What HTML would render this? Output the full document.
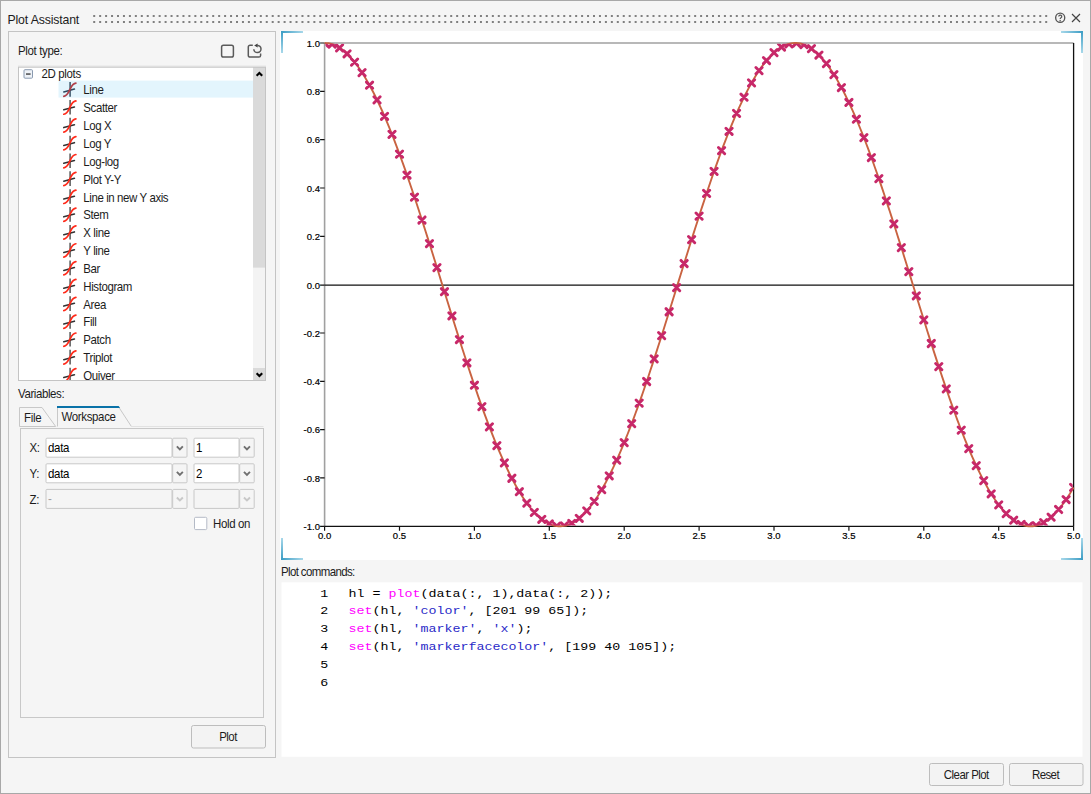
<!DOCTYPE html>
<html><head><meta charset="utf-8"><title>Plot Assistant</title>
<style>
html,body{margin:0;padding:0;width:1091px;height:794px;overflow:hidden;background:#f5f5f5}
svg.main{display:block}
svg.main text{font-family:"Liberation Sans",sans-serif}
</style></head><body>
<svg class="main" width="1091" height="794" viewBox="0 0 1091 794">
<rect x="0" y="0" width="1091" height="794" fill="#f5f5f5"/>
<rect x="0.5" y="0.5" width="1090" height="793" fill="none" stroke="#a8a8a8" stroke-width="1"/>
<text transform="translate(7.5,24) scale(0.9803921568627451,1)" x="0" y="0" style="font-size:12.546000000000001px;letter-spacing:-0.153px" fill="#1c1c1c" text-anchor="start" >Plot Assistant</text>
<path d="M93.20,15h2v2h-2zM99.15,15h2v2h-2zM105.10,15h2v2h-2zM111.05,15h2v2h-2zM117.00,15h2v2h-2zM122.95,15h2v2h-2zM128.90,15h2v2h-2zM134.85,15h2v2h-2zM140.80,15h2v2h-2zM146.75,15h2v2h-2zM152.70,15h2v2h-2zM158.65,15h2v2h-2zM164.60,15h2v2h-2zM170.55,15h2v2h-2zM176.50,15h2v2h-2zM182.45,15h2v2h-2zM188.40,15h2v2h-2zM194.35,15h2v2h-2zM200.30,15h2v2h-2zM206.25,15h2v2h-2zM212.20,15h2v2h-2zM218.15,15h2v2h-2zM224.10,15h2v2h-2zM230.05,15h2v2h-2zM236.00,15h2v2h-2zM241.95,15h2v2h-2zM247.90,15h2v2h-2zM253.85,15h2v2h-2zM259.80,15h2v2h-2zM265.75,15h2v2h-2zM271.70,15h2v2h-2zM277.65,15h2v2h-2zM283.60,15h2v2h-2zM289.55,15h2v2h-2zM295.50,15h2v2h-2zM301.45,15h2v2h-2zM307.40,15h2v2h-2zM313.35,15h2v2h-2zM319.30,15h2v2h-2zM325.25,15h2v2h-2zM331.20,15h2v2h-2zM337.15,15h2v2h-2zM343.10,15h2v2h-2zM349.05,15h2v2h-2zM355.00,15h2v2h-2zM360.95,15h2v2h-2zM366.90,15h2v2h-2zM372.85,15h2v2h-2zM378.80,15h2v2h-2zM384.75,15h2v2h-2zM390.70,15h2v2h-2zM396.65,15h2v2h-2zM402.60,15h2v2h-2zM408.55,15h2v2h-2zM414.50,15h2v2h-2zM420.45,15h2v2h-2zM426.40,15h2v2h-2zM432.35,15h2v2h-2zM438.30,15h2v2h-2zM444.25,15h2v2h-2zM450.20,15h2v2h-2zM456.15,15h2v2h-2zM462.10,15h2v2h-2zM468.05,15h2v2h-2zM474.00,15h2v2h-2zM479.95,15h2v2h-2zM485.90,15h2v2h-2zM491.85,15h2v2h-2zM497.80,15h2v2h-2zM503.75,15h2v2h-2zM509.70,15h2v2h-2zM515.65,15h2v2h-2zM521.60,15h2v2h-2zM527.55,15h2v2h-2zM533.50,15h2v2h-2zM539.45,15h2v2h-2zM545.40,15h2v2h-2zM551.35,15h2v2h-2zM557.30,15h2v2h-2zM563.25,15h2v2h-2zM569.20,15h2v2h-2zM575.15,15h2v2h-2zM581.10,15h2v2h-2zM587.05,15h2v2h-2zM593.00,15h2v2h-2zM598.95,15h2v2h-2zM604.90,15h2v2h-2zM610.85,15h2v2h-2zM616.80,15h2v2h-2zM622.75,15h2v2h-2zM628.70,15h2v2h-2zM634.65,15h2v2h-2zM640.60,15h2v2h-2zM646.55,15h2v2h-2zM652.50,15h2v2h-2zM658.45,15h2v2h-2zM664.40,15h2v2h-2zM670.35,15h2v2h-2zM676.30,15h2v2h-2zM682.25,15h2v2h-2zM688.20,15h2v2h-2zM694.15,15h2v2h-2zM700.10,15h2v2h-2zM706.05,15h2v2h-2zM712.00,15h2v2h-2zM717.95,15h2v2h-2zM723.90,15h2v2h-2zM729.85,15h2v2h-2zM735.80,15h2v2h-2zM741.75,15h2v2h-2zM747.70,15h2v2h-2zM753.65,15h2v2h-2zM759.60,15h2v2h-2zM765.55,15h2v2h-2zM771.50,15h2v2h-2zM777.45,15h2v2h-2zM783.40,15h2v2h-2zM789.35,15h2v2h-2zM795.30,15h2v2h-2zM801.25,15h2v2h-2zM807.20,15h2v2h-2zM813.15,15h2v2h-2zM819.10,15h2v2h-2zM825.05,15h2v2h-2zM831.00,15h2v2h-2zM836.95,15h2v2h-2zM842.90,15h2v2h-2zM848.85,15h2v2h-2zM854.80,15h2v2h-2zM860.75,15h2v2h-2zM866.70,15h2v2h-2zM872.65,15h2v2h-2zM878.60,15h2v2h-2zM884.55,15h2v2h-2zM890.50,15h2v2h-2zM896.45,15h2v2h-2zM902.40,15h2v2h-2zM908.35,15h2v2h-2zM914.30,15h2v2h-2zM920.25,15h2v2h-2zM926.20,15h2v2h-2zM932.15,15h2v2h-2zM938.10,15h2v2h-2zM944.05,15h2v2h-2zM950.00,15h2v2h-2zM955.95,15h2v2h-2zM961.90,15h2v2h-2zM967.85,15h2v2h-2zM973.80,15h2v2h-2zM979.75,15h2v2h-2zM985.70,15h2v2h-2zM991.65,15h2v2h-2zM997.60,15h2v2h-2zM1003.55,15h2v2h-2zM1009.50,15h2v2h-2zM1015.45,15h2v2h-2zM1021.40,15h2v2h-2zM1027.35,15h2v2h-2zM1033.30,15h2v2h-2zM1039.25,15h2v2h-2zM1045.20,15h2v2h-2zM93.20,21h2v2h-2zM99.15,21h2v2h-2zM105.10,21h2v2h-2zM111.05,21h2v2h-2zM117.00,21h2v2h-2zM122.95,21h2v2h-2zM128.90,21h2v2h-2zM134.85,21h2v2h-2zM140.80,21h2v2h-2zM146.75,21h2v2h-2zM152.70,21h2v2h-2zM158.65,21h2v2h-2zM164.60,21h2v2h-2zM170.55,21h2v2h-2zM176.50,21h2v2h-2zM182.45,21h2v2h-2zM188.40,21h2v2h-2zM194.35,21h2v2h-2zM200.30,21h2v2h-2zM206.25,21h2v2h-2zM212.20,21h2v2h-2zM218.15,21h2v2h-2zM224.10,21h2v2h-2zM230.05,21h2v2h-2zM236.00,21h2v2h-2zM241.95,21h2v2h-2zM247.90,21h2v2h-2zM253.85,21h2v2h-2zM259.80,21h2v2h-2zM265.75,21h2v2h-2zM271.70,21h2v2h-2zM277.65,21h2v2h-2zM283.60,21h2v2h-2zM289.55,21h2v2h-2zM295.50,21h2v2h-2zM301.45,21h2v2h-2zM307.40,21h2v2h-2zM313.35,21h2v2h-2zM319.30,21h2v2h-2zM325.25,21h2v2h-2zM331.20,21h2v2h-2zM337.15,21h2v2h-2zM343.10,21h2v2h-2zM349.05,21h2v2h-2zM355.00,21h2v2h-2zM360.95,21h2v2h-2zM366.90,21h2v2h-2zM372.85,21h2v2h-2zM378.80,21h2v2h-2zM384.75,21h2v2h-2zM390.70,21h2v2h-2zM396.65,21h2v2h-2zM402.60,21h2v2h-2zM408.55,21h2v2h-2zM414.50,21h2v2h-2zM420.45,21h2v2h-2zM426.40,21h2v2h-2zM432.35,21h2v2h-2zM438.30,21h2v2h-2zM444.25,21h2v2h-2zM450.20,21h2v2h-2zM456.15,21h2v2h-2zM462.10,21h2v2h-2zM468.05,21h2v2h-2zM474.00,21h2v2h-2zM479.95,21h2v2h-2zM485.90,21h2v2h-2zM491.85,21h2v2h-2zM497.80,21h2v2h-2zM503.75,21h2v2h-2zM509.70,21h2v2h-2zM515.65,21h2v2h-2zM521.60,21h2v2h-2zM527.55,21h2v2h-2zM533.50,21h2v2h-2zM539.45,21h2v2h-2zM545.40,21h2v2h-2zM551.35,21h2v2h-2zM557.30,21h2v2h-2zM563.25,21h2v2h-2zM569.20,21h2v2h-2zM575.15,21h2v2h-2zM581.10,21h2v2h-2zM587.05,21h2v2h-2zM593.00,21h2v2h-2zM598.95,21h2v2h-2zM604.90,21h2v2h-2zM610.85,21h2v2h-2zM616.80,21h2v2h-2zM622.75,21h2v2h-2zM628.70,21h2v2h-2zM634.65,21h2v2h-2zM640.60,21h2v2h-2zM646.55,21h2v2h-2zM652.50,21h2v2h-2zM658.45,21h2v2h-2zM664.40,21h2v2h-2zM670.35,21h2v2h-2zM676.30,21h2v2h-2zM682.25,21h2v2h-2zM688.20,21h2v2h-2zM694.15,21h2v2h-2zM700.10,21h2v2h-2zM706.05,21h2v2h-2zM712.00,21h2v2h-2zM717.95,21h2v2h-2zM723.90,21h2v2h-2zM729.85,21h2v2h-2zM735.80,21h2v2h-2zM741.75,21h2v2h-2zM747.70,21h2v2h-2zM753.65,21h2v2h-2zM759.60,21h2v2h-2zM765.55,21h2v2h-2zM771.50,21h2v2h-2zM777.45,21h2v2h-2zM783.40,21h2v2h-2zM789.35,21h2v2h-2zM795.30,21h2v2h-2zM801.25,21h2v2h-2zM807.20,21h2v2h-2zM813.15,21h2v2h-2zM819.10,21h2v2h-2zM825.05,21h2v2h-2zM831.00,21h2v2h-2zM836.95,21h2v2h-2zM842.90,21h2v2h-2zM848.85,21h2v2h-2zM854.80,21h2v2h-2zM860.75,21h2v2h-2zM866.70,21h2v2h-2zM872.65,21h2v2h-2zM878.60,21h2v2h-2zM884.55,21h2v2h-2zM890.50,21h2v2h-2zM896.45,21h2v2h-2zM902.40,21h2v2h-2zM908.35,21h2v2h-2zM914.30,21h2v2h-2zM920.25,21h2v2h-2zM926.20,21h2v2h-2zM932.15,21h2v2h-2zM938.10,21h2v2h-2zM944.05,21h2v2h-2zM950.00,21h2v2h-2zM955.95,21h2v2h-2zM961.90,21h2v2h-2zM967.85,21h2v2h-2zM973.80,21h2v2h-2zM979.75,21h2v2h-2zM985.70,21h2v2h-2zM991.65,21h2v2h-2zM997.60,21h2v2h-2zM1003.55,21h2v2h-2zM1009.50,21h2v2h-2zM1015.45,21h2v2h-2zM1021.40,21h2v2h-2zM1027.35,21h2v2h-2zM1033.30,21h2v2h-2zM1039.25,21h2v2h-2zM1045.20,21h2v2h-2z" fill="#808080"/>
<circle cx="1060.2" cy="17.7" r="4.55" fill="none" stroke="#555" stroke-width="1.35"/>
<path d="M1058.75,16.5 a1.5,1.45 0 1 1 2.25,1.25 q-0.8,0.45 -0.8,1.25" fill="none" stroke="#555" stroke-width="1.25"/>
<rect x="1059.5" y="19.9" width="1.3" height="1.2" fill="#555"/>
<path d="M1072,14 L1080,22 M1080,14 L1072,22" stroke="#444" stroke-width="1.15"/>
<rect x="8.5" y="31.5" width="267" height="726" fill="none" stroke="#c4c4c4"/>
<text transform="translate(18,54.5) scale(0.8928571428571428,1)" x="0" y="0" style="font-size:12.88px;letter-spacing:-0.392px" fill="#1c1c1c" text-anchor="start" >Plot type:</text>
<rect x="221.6" y="45.3" width="11.8" height="11.8" rx="1.8" fill="none" stroke="#5a5a5a" stroke-width="1.5"/>
<path d="M252.8,45.3 H250 a1.7,1.7 0 0 0 -1.7,1.7 V55.4 a1.7,1.7 0 0 0 1.7,1.7 H258.9 a1.7,1.7 0 0 0 1.7,-1.7 V53.6" fill="none" stroke="#5a5a5a" stroke-width="1.5"/>
<path d="M257.3,45.4 A3.6,3.6 0 1 1 253.8,49.2" fill="none" stroke="#5a5a5a" stroke-width="1.5"/>
<path d="M254.2,45.6 L257.6,43.4 L257.6,47.6 z" fill="#404040"/>
<rect x="18" y="67" width="248" height="314" fill="#fff"/>
<rect x="58.5" y="80.6" width="194.5" height="17" fill="#e3f5fd"/>
<rect x="253" y="67" width="12.5" height="313.5" fill="#f3f3f3"/>
<rect x="253" y="67" width="12.5" height="200.6" fill="#dadada"/>
<rect x="253" y="368" width="12.5" height="12.5" fill="#dadada"/>
<path d="M256.6,75.8 L259.4,73 L262.2,75.8" fill="none" stroke="#000" stroke-width="2.1"/>
<path d="M256.6,373.2 L259.4,376 L262.2,373.2" fill="none" stroke="#000" stroke-width="2.1"/>
<rect x="18.5" y="67.2" width="247" height="313.3" fill="none" stroke="#c4c4c4"/>
<path d="M18,66.2 H266" stroke="#dcdcdc"/>
<rect x="24" y="69.7" width="8.5" height="8.5" rx="1" fill="#eef2f7" stroke="#8a9ab0" stroke-width="1"/>
<rect x="26" y="73.4" width="4.6" height="1.3" fill="#333"/>
<text transform="translate(41.5,78) scale(0.8928571428571428,1)" x="0" y="0" style="font-size:12.88px;letter-spacing:-0.392px" fill="#1c1c1c" text-anchor="start" >2D plots</text>
<svg x="18" y="67" width="235" height="313" overflow="hidden"><g transform="translate(-18,-67)">
<path d="M70.1,82.10 V96.70" stroke="#3a5468" stroke-width="1.5" fill="none"/>
<path d="M63.8,91.90 L74.4,89.10" stroke="#2f4a60" stroke-width="1.6" stroke-linecap="round" fill="none"/>
<path d="M63.8,96.40 C67.5,95.70 68.5,92.40 70,89.40 S72.5,83.40 75.9,83.10" stroke="#b0404a" stroke-width="1.7" stroke-linecap="round" fill="none"/>
<text transform="translate(83.3,94.4) scale(0.8928571428571428,1)" x="0" y="0" style="font-size:12.88px;letter-spacing:-0.448px" fill="#1c1c1c" text-anchor="start" >Line</text>
<path d="M70.1,99.95 V114.55" stroke="#555" stroke-width="1.5" fill="none"/>
<path d="M63.8,109.75 L74.4,106.95" stroke="#333" stroke-width="1.6" stroke-linecap="round" fill="none"/>
<path d="M63.8,114.25 C67.5,113.55 68.5,110.25 70,107.25 S72.5,101.25 75.9,100.95" stroke="#ff2a1a" stroke-width="1.7" stroke-linecap="round" fill="none"/>
<text transform="translate(83.3,112.25) scale(0.8928571428571428,1)" x="0" y="0" style="font-size:12.88px;letter-spacing:-0.448px" fill="#1c1c1c" text-anchor="start" >Scatter</text>
<path d="M70.1,117.80 V132.40" stroke="#555" stroke-width="1.5" fill="none"/>
<path d="M63.8,127.60 L74.4,124.80" stroke="#333" stroke-width="1.6" stroke-linecap="round" fill="none"/>
<path d="M63.8,132.10 C67.5,131.40 68.5,128.10 70,125.10 S72.5,119.10 75.9,118.80" stroke="#ff2a1a" stroke-width="1.7" stroke-linecap="round" fill="none"/>
<text transform="translate(83.3,130.1) scale(0.8928571428571428,1)" x="0" y="0" style="font-size:12.88px;letter-spacing:-0.448px" fill="#1c1c1c" text-anchor="start" >Log X</text>
<path d="M70.1,135.65 V150.25" stroke="#555" stroke-width="1.5" fill="none"/>
<path d="M63.8,145.45 L74.4,142.65" stroke="#333" stroke-width="1.6" stroke-linecap="round" fill="none"/>
<path d="M63.8,149.95 C67.5,149.25 68.5,145.95 70,142.95 S72.5,136.95 75.9,136.65" stroke="#ff2a1a" stroke-width="1.7" stroke-linecap="round" fill="none"/>
<text transform="translate(83.3,147.95) scale(0.8928571428571428,1)" x="0" y="0" style="font-size:12.88px;letter-spacing:-0.448px" fill="#1c1c1c" text-anchor="start" >Log Y</text>
<path d="M70.1,153.50 V168.10" stroke="#555" stroke-width="1.5" fill="none"/>
<path d="M63.8,163.30 L74.4,160.50" stroke="#333" stroke-width="1.6" stroke-linecap="round" fill="none"/>
<path d="M63.8,167.80 C67.5,167.10 68.5,163.80 70,160.80 S72.5,154.80 75.9,154.50" stroke="#ff2a1a" stroke-width="1.7" stroke-linecap="round" fill="none"/>
<text transform="translate(83.3,165.8) scale(0.8928571428571428,1)" x="0" y="0" style="font-size:12.88px;letter-spacing:-0.448px" fill="#1c1c1c" text-anchor="start" >Log-log</text>
<path d="M70.1,171.35 V185.95" stroke="#555" stroke-width="1.5" fill="none"/>
<path d="M63.8,181.15 L74.4,178.35" stroke="#333" stroke-width="1.6" stroke-linecap="round" fill="none"/>
<path d="M63.8,185.65 C67.5,184.95 68.5,181.65 70,178.65 S72.5,172.65 75.9,172.35" stroke="#ff2a1a" stroke-width="1.7" stroke-linecap="round" fill="none"/>
<text transform="translate(83.3,183.65) scale(0.8928571428571428,1)" x="0" y="0" style="font-size:12.88px;letter-spacing:-0.448px" fill="#1c1c1c" text-anchor="start" >Plot Y-Y</text>
<path d="M70.1,189.20 V203.80" stroke="#555" stroke-width="1.5" fill="none"/>
<path d="M63.8,199.00 L74.4,196.20" stroke="#333" stroke-width="1.6" stroke-linecap="round" fill="none"/>
<path d="M63.8,203.50 C67.5,202.80 68.5,199.50 70,196.50 S72.5,190.50 75.9,190.20" stroke="#ff2a1a" stroke-width="1.7" stroke-linecap="round" fill="none"/>
<text transform="translate(83.3,201.5) scale(0.8928571428571428,1)" x="0" y="0" style="font-size:12.88px;letter-spacing:-0.448px" fill="#1c1c1c" text-anchor="start" >Line in new Y axis</text>
<path d="M70.1,207.05 V221.65" stroke="#555" stroke-width="1.5" fill="none"/>
<path d="M63.8,216.85 L74.4,214.05" stroke="#333" stroke-width="1.6" stroke-linecap="round" fill="none"/>
<path d="M63.8,221.35 C67.5,220.65 68.5,217.35 70,214.35 S72.5,208.35 75.9,208.05" stroke="#ff2a1a" stroke-width="1.7" stroke-linecap="round" fill="none"/>
<text transform="translate(83.3,219.35) scale(0.8928571428571428,1)" x="0" y="0" style="font-size:12.88px;letter-spacing:-0.448px" fill="#1c1c1c" text-anchor="start" >Stem</text>
<path d="M70.1,224.90 V239.50" stroke="#555" stroke-width="1.5" fill="none"/>
<path d="M63.8,234.70 L74.4,231.90" stroke="#333" stroke-width="1.6" stroke-linecap="round" fill="none"/>
<path d="M63.8,239.20 C67.5,238.50 68.5,235.20 70,232.20 S72.5,226.20 75.9,225.90" stroke="#ff2a1a" stroke-width="1.7" stroke-linecap="round" fill="none"/>
<text transform="translate(83.3,237.2) scale(0.8928571428571428,1)" x="0" y="0" style="font-size:12.88px;letter-spacing:-0.448px" fill="#1c1c1c" text-anchor="start" >X line</text>
<path d="M70.1,242.75 V257.35" stroke="#555" stroke-width="1.5" fill="none"/>
<path d="M63.8,252.55 L74.4,249.75" stroke="#333" stroke-width="1.6" stroke-linecap="round" fill="none"/>
<path d="M63.8,257.05 C67.5,256.35 68.5,253.05 70,250.05 S72.5,244.05 75.9,243.75" stroke="#ff2a1a" stroke-width="1.7" stroke-linecap="round" fill="none"/>
<text transform="translate(83.3,255.05) scale(0.8928571428571428,1)" x="0" y="0" style="font-size:12.88px;letter-spacing:-0.448px" fill="#1c1c1c" text-anchor="start" >Y line</text>
<path d="M70.1,260.60 V275.20" stroke="#555" stroke-width="1.5" fill="none"/>
<path d="M63.8,270.40 L74.4,267.60" stroke="#333" stroke-width="1.6" stroke-linecap="round" fill="none"/>
<path d="M63.8,274.90 C67.5,274.20 68.5,270.90 70,267.90 S72.5,261.90 75.9,261.60" stroke="#ff2a1a" stroke-width="1.7" stroke-linecap="round" fill="none"/>
<text transform="translate(83.3,272.9) scale(0.8928571428571428,1)" x="0" y="0" style="font-size:12.88px;letter-spacing:-0.448px" fill="#1c1c1c" text-anchor="start" >Bar</text>
<path d="M70.1,278.45 V293.05" stroke="#555" stroke-width="1.5" fill="none"/>
<path d="M63.8,288.25 L74.4,285.45" stroke="#333" stroke-width="1.6" stroke-linecap="round" fill="none"/>
<path d="M63.8,292.75 C67.5,292.05 68.5,288.75 70,285.75 S72.5,279.75 75.9,279.45" stroke="#ff2a1a" stroke-width="1.7" stroke-linecap="round" fill="none"/>
<text transform="translate(83.3,290.75) scale(0.8928571428571428,1)" x="0" y="0" style="font-size:12.88px;letter-spacing:-0.448px" fill="#1c1c1c" text-anchor="start" >Histogram</text>
<path d="M70.1,296.30 V310.90" stroke="#555" stroke-width="1.5" fill="none"/>
<path d="M63.8,306.10 L74.4,303.30" stroke="#333" stroke-width="1.6" stroke-linecap="round" fill="none"/>
<path d="M63.8,310.60 C67.5,309.90 68.5,306.60 70,303.60 S72.5,297.60 75.9,297.30" stroke="#ff2a1a" stroke-width="1.7" stroke-linecap="round" fill="none"/>
<text transform="translate(83.3,308.6) scale(0.8928571428571428,1)" x="0" y="0" style="font-size:12.88px;letter-spacing:-0.448px" fill="#1c1c1c" text-anchor="start" >Area</text>
<path d="M70.1,314.15 V328.75" stroke="#555" stroke-width="1.5" fill="none"/>
<path d="M63.8,323.95 L74.4,321.15" stroke="#333" stroke-width="1.6" stroke-linecap="round" fill="none"/>
<path d="M63.8,328.45 C67.5,327.75 68.5,324.45 70,321.45 S72.5,315.45 75.9,315.15" stroke="#ff2a1a" stroke-width="1.7" stroke-linecap="round" fill="none"/>
<text transform="translate(83.3,326.45) scale(0.8928571428571428,1)" x="0" y="0" style="font-size:12.88px;letter-spacing:-0.448px" fill="#1c1c1c" text-anchor="start" >Fill</text>
<path d="M70.1,332.00 V346.60" stroke="#555" stroke-width="1.5" fill="none"/>
<path d="M63.8,341.80 L74.4,339.00" stroke="#333" stroke-width="1.6" stroke-linecap="round" fill="none"/>
<path d="M63.8,346.30 C67.5,345.60 68.5,342.30 70,339.30 S72.5,333.30 75.9,333.00" stroke="#ff2a1a" stroke-width="1.7" stroke-linecap="round" fill="none"/>
<text transform="translate(83.3,344.3) scale(0.8928571428571428,1)" x="0" y="0" style="font-size:12.88px;letter-spacing:-0.448px" fill="#1c1c1c" text-anchor="start" >Patch</text>
<path d="M70.1,349.85 V364.45" stroke="#555" stroke-width="1.5" fill="none"/>
<path d="M63.8,359.65 L74.4,356.85" stroke="#333" stroke-width="1.6" stroke-linecap="round" fill="none"/>
<path d="M63.8,364.15 C67.5,363.45 68.5,360.15 70,357.15 S72.5,351.15 75.9,350.85" stroke="#ff2a1a" stroke-width="1.7" stroke-linecap="round" fill="none"/>
<text transform="translate(83.3,362.15) scale(0.8928571428571428,1)" x="0" y="0" style="font-size:12.88px;letter-spacing:-0.448px" fill="#1c1c1c" text-anchor="start" >Triplot</text>
<path d="M70.1,367.70 V382.30" stroke="#555" stroke-width="1.5" fill="none"/>
<path d="M63.8,377.50 L74.4,374.70" stroke="#333" stroke-width="1.6" stroke-linecap="round" fill="none"/>
<path d="M63.8,382.00 C67.5,381.30 68.5,378.00 70,375.00 S72.5,369.00 75.9,368.70" stroke="#ff2a1a" stroke-width="1.7" stroke-linecap="round" fill="none"/>
<text transform="translate(83.3,380.0) scale(0.8928571428571428,1)" x="0" y="0" style="font-size:12.88px;letter-spacing:-0.448px" fill="#1c1c1c" text-anchor="start" >Quiver</text>
</g></svg>
<text transform="translate(18,398) scale(0.8928571428571428,1)" x="0" y="0" style="font-size:12.88px;letter-spacing:-0.448px" fill="#1c1c1c" text-anchor="start" >Variables:</text>
<rect x="20.5" y="428.5" width="243" height="289" fill="none" stroke="#c8c8c8"/>
<path d="M19.5,426.5 V407.5 H42 L55.7,426.5 Z" fill="#f5f5f5" stroke="#c8c8c8"/>
<text transform="translate(24,421.7) scale(0.8928571428571428,1)" x="0" y="0" style="font-size:12.88px;letter-spacing:-0.336px" fill="#1c1c1c" text-anchor="start" >File</text>
<path d="M57.5,426.5 V407 H118.7 L131.4,426.5" fill="#f5f5f5" stroke="#c8c8c8"/>
<path d="M57,406 H118.7 L120,408 H57 Z" fill="#0a72a8"/>
<path d="M131.4,426.5 H263.5" stroke="#e2e2e2"/>
<text transform="translate(61.5,420.5) scale(0.8928571428571428,1)" x="0" y="0" style="font-size:12.88px;letter-spacing:-0.392px" fill="#1c1c1c" text-anchor="start" >Workspace</text>
<text transform="translate(29.5,452.3) scale(0.8928571428571428,1)" x="0" y="0" style="font-size:12.88px;letter-spacing:-0.336px" fill="#1c1c1c" text-anchor="start" >X:</text>
<rect x="46.0" y="438.2" width="126" height="19" rx="1" fill="#fff" stroke="#c8c8c8"/>
<rect x="172.7" y="438.2" width="14.3" height="19" rx="1" fill="#f5f5f5" stroke="#c8c8c8"/>
<path d="M176.85,446.3 L179.85,449.3 L182.85,446.3" fill="none" stroke="#707070" stroke-width="1.9"/>
<text transform="translate(48.0,451.9) scale(0.8928571428571428,1)" x="0" y="0" style="font-size:12.88px;letter-spacing:-0.336px" fill="#000" text-anchor="start" >data</text>
<rect x="194.0" y="438.2" width="45" height="19" rx="1" fill="#fff" stroke="#c8c8c8"/>
<rect x="239.7" y="438.2" width="14.5" height="19" rx="1" fill="#f5f5f5" stroke="#c8c8c8"/>
<path d="M243.95,446.3 L246.95,449.3 L249.95,446.3" fill="none" stroke="#707070" stroke-width="1.9"/>
<text transform="translate(196.0,451.9) scale(0.8928571428571428,1)" x="0" y="0" style="font-size:12.88px;letter-spacing:-0.336px" fill="#000" text-anchor="start" >1</text>
<text transform="translate(29.5,477.90000000000003) scale(0.8928571428571428,1)" x="0" y="0" style="font-size:12.88px;letter-spacing:-0.336px" fill="#1c1c1c" text-anchor="start" >Y:</text>
<rect x="46.0" y="463.8" width="126" height="19" rx="1" fill="#fff" stroke="#c8c8c8"/>
<rect x="172.7" y="463.8" width="14.3" height="19" rx="1" fill="#f5f5f5" stroke="#c8c8c8"/>
<path d="M176.85,471.90000000000003 L179.85,474.90000000000003 L182.85,471.90000000000003" fill="none" stroke="#707070" stroke-width="1.9"/>
<text transform="translate(48.0,477.5) scale(0.8928571428571428,1)" x="0" y="0" style="font-size:12.88px;letter-spacing:-0.336px" fill="#000" text-anchor="start" >data</text>
<rect x="194.0" y="463.8" width="45" height="19" rx="1" fill="#fff" stroke="#c8c8c8"/>
<rect x="239.7" y="463.8" width="14.5" height="19" rx="1" fill="#f5f5f5" stroke="#c8c8c8"/>
<path d="M243.95,471.90000000000003 L246.95,474.90000000000003 L249.95,471.90000000000003" fill="none" stroke="#707070" stroke-width="1.9"/>
<text transform="translate(196.0,477.5) scale(0.8928571428571428,1)" x="0" y="0" style="font-size:12.88px;letter-spacing:-0.336px" fill="#000" text-anchor="start" >2</text>
<text transform="translate(29.5,503.5) scale(0.8928571428571428,1)" x="0" y="0" style="font-size:12.88px;letter-spacing:-0.336px" fill="#1c1c1c" text-anchor="start" >Z:</text>
<rect x="46.0" y="489.4" width="126" height="19" rx="1" fill="#f5f5f5" stroke="#c8c8c8"/>
<rect x="172.7" y="489.4" width="14.3" height="19" rx="1" fill="#f5f5f5" stroke="#c8c8c8"/>
<path d="M176.85,497.5 L179.85,500.5 L182.85,497.5" fill="none" stroke="#c8c8c8" stroke-width="1.9"/>
<text transform="translate(48.0,503.09999999999997) scale(0.8928571428571428,1)" x="0" y="0" style="font-size:12.88px;letter-spacing:-0.336px" fill="#a0a0a0" text-anchor="start" >-</text>
<rect x="194.0" y="489.4" width="45" height="19" rx="1" fill="#f5f5f5" stroke="#c8c8c8"/>
<rect x="239.7" y="489.4" width="14.5" height="19" rx="1" fill="#f5f5f5" stroke="#c8c8c8"/>
<path d="M243.95,497.5 L246.95,500.5 L249.95,497.5" fill="none" stroke="#c8c8c8" stroke-width="1.9"/>
<rect x="194.5" y="517.3" width="12.3" height="12.3" rx="1.2" fill="#fff" stroke="#b4bac6"/>
<text transform="translate(213,528) scale(0.8928571428571428,1)" x="0" y="0" style="font-size:12.88px;letter-spacing:-0.392px" fill="#1c1c1c" text-anchor="start" >Hold on</text>
<rect x="191.5" y="725.5" width="74" height="22.5" rx="2" fill="#f3f3f3" stroke="#bdbdbd"/>
<text transform="translate(228,741) scale(0.8928571428571428,1)" x="0" y="0" style="font-size:12.88px;letter-spacing:-0.616px" fill="#1c1c1c" text-anchor="middle" >Plot</text>
<rect x="280" y="31" width="803" height="529" fill="#fff"/>
<defs>
<linearGradient id="gh" x1="0" x2="1" y1="0" y2="0"><stop offset="0" stop-color="#3a9cc4"/><stop offset="1" stop-color="#a8d8ea"/></linearGradient>
<linearGradient id="ghr" x1="1" x2="0" y1="0" y2="0"><stop offset="0" stop-color="#3a9cc4"/><stop offset="1" stop-color="#a8d8ea"/></linearGradient>
<linearGradient id="gv" x1="0" x2="0" y1="0" y2="1"><stop offset="0" stop-color="#3a9cc4"/><stop offset="1" stop-color="#a8d8ea"/></linearGradient>
<linearGradient id="gvr" x1="0" x2="0" y1="1" y2="0"><stop offset="0" stop-color="#3a9cc4"/><stop offset="1" stop-color="#a8d8ea"/></linearGradient>
</defs>
<rect x="281" y="31" width="22" height="2" fill="url(#gh)"/><rect x="281" y="31" width="2" height="22" fill="url(#gv)"/>
<rect x="1061" y="31" width="22" height="2" fill="url(#ghr)"/><rect x="1081" y="31" width="2" height="22" fill="url(#gv)"/>
<rect x="281" y="558" width="22" height="2" fill="url(#gh)"/><rect x="281" y="538" width="2" height="22" fill="url(#gvr)"/>
<rect x="1061" y="558" width="22" height="2" fill="url(#ghr)"/><rect x="1081" y="538" width="2" height="22" fill="url(#gvr)"/>
<path d="M324.6,43.0 H1073.6" stroke="#a0a0a0" stroke-width="1.7"/>
<path d="M324.6,43.0 V526.3" stroke="#a0a0a0" stroke-width="1.6"/>
<path d="M1073.6,43.0 V526.3" stroke="#111" stroke-width="1.3"/>
<path d="M324.6,526.3 H1073.6" stroke="#111" stroke-width="1.3"/>
<path d="M324.6,285.2 H1073.6" stroke="#111" stroke-width="1.3"/>
<text x="320.1" y="46.6" style="font-size:9.5px;letter-spacing:0.05px" fill="#000" text-anchor="end" stroke="#000" stroke-width="0.2">1.0</text>
<text x="320.1" y="94.92999999999998" style="font-size:9.5px;letter-spacing:0.05px" fill="#000" text-anchor="end" stroke="#000" stroke-width="0.2">0.8</text>
<text x="320.1" y="143.26" style="font-size:9.5px;letter-spacing:0.05px" fill="#000" text-anchor="end" stroke="#000" stroke-width="0.2">0.6</text>
<text x="320.1" y="191.59" style="font-size:9.5px;letter-spacing:0.05px" fill="#000" text-anchor="end" stroke="#000" stroke-width="0.2">0.4</text>
<text x="320.1" y="239.92" style="font-size:9.5px;letter-spacing:0.05px" fill="#000" text-anchor="end" stroke="#000" stroke-width="0.2">0.2</text>
<text x="320.1" y="288.8" style="font-size:9.5px;letter-spacing:0.05px" fill="#000" text-anchor="end" stroke="#000" stroke-width="0.2">0.0</text>
<text x="320.1" y="336.58000000000004" style="font-size:9.5px;letter-spacing:0.05px" fill="#000" text-anchor="end" stroke="#000" stroke-width="0.2">-0.2</text>
<text x="320.1" y="384.91" style="font-size:9.5px;letter-spacing:0.05px" fill="#000" text-anchor="end" stroke="#000" stroke-width="0.2">-0.4</text>
<text x="320.1" y="433.24" style="font-size:9.5px;letter-spacing:0.05px" fill="#000" text-anchor="end" stroke="#000" stroke-width="0.2">-0.6</text>
<text x="320.1" y="481.57" style="font-size:9.5px;letter-spacing:0.05px" fill="#000" text-anchor="end" stroke="#000" stroke-width="0.2">-0.8</text>
<text x="320.1" y="529.9" style="font-size:9.5px;letter-spacing:0.05px" fill="#000" text-anchor="end" stroke="#000" stroke-width="0.2">-1.0</text>
<text x="324.6" y="538.8" style="font-size:9.5px;letter-spacing:0.05px" fill="#000" text-anchor="middle" stroke="#000" stroke-width="0.2">0.0</text>
<text x="399.5" y="538.8" style="font-size:9.5px;letter-spacing:0.05px" fill="#000" text-anchor="middle" stroke="#000" stroke-width="0.2">0.5</text>
<text x="474.4" y="538.8" style="font-size:9.5px;letter-spacing:0.05px" fill="#000" text-anchor="middle" stroke="#000" stroke-width="0.2">1.0</text>
<text x="549.3" y="538.8" style="font-size:9.5px;letter-spacing:0.05px" fill="#000" text-anchor="middle" stroke="#000" stroke-width="0.2">1.5</text>
<text x="624.2" y="538.8" style="font-size:9.5px;letter-spacing:0.05px" fill="#000" text-anchor="middle" stroke="#000" stroke-width="0.2">2.0</text>
<text x="699.0999999999999" y="538.8" style="font-size:9.5px;letter-spacing:0.05px" fill="#000" text-anchor="middle" stroke="#000" stroke-width="0.2">2.5</text>
<text x="774.0" y="538.8" style="font-size:9.5px;letter-spacing:0.05px" fill="#000" text-anchor="middle" stroke="#000" stroke-width="0.2">3.0</text>
<text x="848.9" y="538.8" style="font-size:9.5px;letter-spacing:0.05px" fill="#000" text-anchor="middle" stroke="#000" stroke-width="0.2">3.5</text>
<text x="923.8" y="538.8" style="font-size:9.5px;letter-spacing:0.05px" fill="#000" text-anchor="middle" stroke="#000" stroke-width="0.2">4.0</text>
<text x="998.6999999999999" y="538.8" style="font-size:9.5px;letter-spacing:0.05px" fill="#000" text-anchor="middle" stroke="#000" stroke-width="0.2">4.5</text>
<text x="1073.6" y="538.8" style="font-size:9.5px;letter-spacing:0.05px" fill="#000" text-anchor="middle" stroke="#000" stroke-width="0.2">5.0</text>
<path d="M320.10,43.00H324.6M320.10,91.33H324.6M320.10,139.66H324.6M320.10,187.99H324.6M320.10,236.32H324.6M320.10,285.20H324.6M320.10,332.98H324.6M320.10,381.31H324.6M320.10,429.64H324.6M320.10,477.97H324.6M320.10,526.30H324.6M324.60,526.3V530.8M399.50,526.3V530.8M474.40,526.3V530.8M549.30,526.3V530.8M624.20,526.3V530.8M699.10,526.3V530.8M774.00,526.3V530.8M848.90,526.3V530.8M923.80,526.3V530.8M998.70,526.3V530.8M1073.60,526.3V530.8" stroke="#111" stroke-width="1.2"/>
<polyline points="324.60,43.00 326.47,43.08 328.35,43.30 330.22,43.68 332.09,44.21 333.96,44.89 335.84,45.71 337.71,46.69 339.58,47.82 341.45,49.09 343.33,50.51 345.20,52.08 347.07,53.79 348.94,55.65 350.81,57.65 352.69,59.79 354.56,62.08 356.43,64.50 358.31,67.06 360.18,69.75 362.05,72.58 363.92,75.54 365.80,78.64 367.67,81.86 369.54,85.21 371.41,88.68 373.29,92.28 375.16,95.99 377.03,99.83 378.90,103.78 380.78,107.84 382.65,112.01 384.52,116.29 386.39,120.68 388.26,125.17 390.14,129.75 392.01,134.44 393.88,139.22 395.75,144.09 397.63,149.04 399.50,154.09 401.37,159.21 403.25,164.41 405.12,169.69 406.99,175.04 408.86,180.46 410.74,185.94 412.61,191.48 414.48,197.09 416.35,202.74 418.23,208.45 420.10,214.21 421.97,220.01 423.84,225.85 425.72,231.73 427.59,237.64 429.46,243.58 431.33,249.54 433.20,255.53 435.08,261.54 436.95,267.56 438.82,273.59 440.69,279.62 442.57,285.67 444.44,291.71 446.31,297.74 448.19,303.77 450.06,309.79 451.93,315.79 453.80,321.77 455.68,327.72 457.55,333.65 459.42,339.55 461.29,345.42 463.17,351.25 465.04,357.03 466.91,362.77 468.78,368.46 470.65,374.10 472.53,379.69 474.40,385.21 476.27,390.67 478.14,396.07 480.02,401.39 481.89,406.65 483.76,411.82 485.63,416.92 487.51,421.93 489.38,426.86 491.25,431.70 493.12,436.45 495.00,441.10 496.87,445.66 498.74,450.11 500.62,454.46 502.49,458.71 504.36,462.84 506.23,466.87 508.11,470.78 509.98,474.57 511.85,478.25 513.72,481.80 515.60,485.23 517.47,488.54 519.34,491.72 521.21,494.77 523.09,497.68 524.96,500.47 526.83,503.12 528.70,505.63 530.58,508.01 532.45,510.24 534.32,512.34 536.19,514.29 538.07,516.10 539.94,517.76 541.81,519.28 543.68,520.65 545.56,521.88 547.43,522.95 549.30,523.88 551.17,524.66 553.04,525.29 554.92,525.76 556.79,526.09 558.66,526.27 560.53,526.29 562.41,526.17 564.28,525.89 566.15,525.46 568.02,524.88 569.90,524.15 571.77,523.27 573.64,522.25 575.51,521.07 577.39,519.75 579.26,518.28 581.13,516.66 583.00,514.90 584.88,512.99 586.75,510.94 588.62,508.76 590.49,506.43 592.37,503.96 594.24,501.35 596.11,498.61 597.98,495.74 599.86,492.73 601.73,489.59 603.60,486.33 605.47,482.94 607.35,479.42 609.22,475.79 611.09,472.03 612.96,468.16 614.84,464.17 616.71,460.07 618.58,455.86 620.45,451.55 622.33,447.13 624.20,442.60 626.07,437.98 627.94,433.27 629.82,428.46 631.69,423.56 633.56,418.57 635.43,413.50 637.31,408.35 639.18,403.12 641.05,397.82 642.92,392.45 644.80,387.01 646.67,381.50 648.54,375.94 650.41,370.32 652.29,364.64 654.16,358.92 656.03,353.15 657.90,347.33 659.78,341.48 661.65,335.59 663.52,329.67 665.39,323.72 667.27,317.75 669.14,311.75 671.01,305.74 672.88,299.72 674.76,293.68 676.63,287.64 678.50,281.60 680.38,275.56 682.25,269.53 684.12,263.51 685.99,257.50 687.87,251.50 689.74,245.53 691.61,239.58 693.48,233.66 695.36,227.77 697.23,221.92 699.10,216.10 700.97,210.33 702.85,204.61 704.72,198.93 706.59,193.31 708.46,187.75 710.34,182.24 712.21,176.80 714.08,171.43 715.95,166.13 717.83,160.90 719.70,155.75 721.57,150.69 723.44,145.70 725.31,140.80 727.19,135.99 729.06,131.28 730.93,126.66 732.81,122.14 734.68,117.72 736.55,113.40 738.42,109.19 740.29,105.09 742.17,101.11 744.04,97.23 745.91,93.48 747.78,89.84 749.66,86.33 751.53,82.94 753.40,79.68 755.27,76.54 757.15,73.54 759.02,70.66 760.89,67.92 762.76,65.32 764.64,62.85 766.51,60.52 768.38,58.34 770.25,56.29 772.13,54.39 774.00,52.62 775.87,51.01 777.74,49.54 779.62,48.22 781.49,47.04 783.36,46.02 785.23,45.14 787.11,44.41 788.98,43.84 790.85,43.41 792.72,43.13 794.60,43.01 796.47,43.03 798.34,43.21 800.21,43.54 802.09,44.02 803.96,44.65 805.83,45.43 807.70,46.35 809.58,47.43 811.45,48.66 813.32,50.03 815.19,51.55 817.07,53.22 818.94,55.03 820.81,56.98 822.68,59.08 824.56,61.31 826.43,63.69 828.30,66.20 830.17,68.86 832.05,71.64 833.92,74.56 835.79,77.61 837.66,80.79 839.54,84.10 841.41,87.53 843.28,91.09 845.15,94.76 847.03,98.56 848.90,102.47 850.77,106.50 852.64,110.63 854.52,114.88 856.39,119.23 858.26,123.68 860.13,128.24 862.01,132.89 863.88,137.64 865.75,142.48 867.62,147.41 869.50,152.43 871.37,157.52 873.24,162.70 875.11,167.95 876.99,173.28 878.86,178.68 880.73,184.14 882.60,189.66 884.48,195.25 886.35,200.89 888.22,206.58 890.09,212.32 891.97,218.11 893.84,223.93 895.71,229.80 897.58,235.70 899.46,241.63 901.33,247.59 903.20,253.57 905.07,259.57 906.95,265.58 908.82,271.61 910.69,277.65 912.56,283.69 914.44,289.73 916.31,295.77 918.18,301.80 920.05,307.82 921.93,313.82 923.80,319.81 925.67,325.78 927.54,331.72 929.42,337.63 931.29,343.50 933.16,349.34 935.03,355.14 936.91,360.90 938.78,366.61 940.65,372.26 942.52,377.87 944.40,383.41 946.27,388.89 948.14,394.31 950.01,399.66 951.89,404.93 953.76,410.14 955.63,415.26 957.50,420.30 959.38,425.26 961.25,430.13 963.12,434.90 965.00,439.59 966.87,444.18 968.74,448.66 970.61,453.05 972.49,457.33 974.36,461.50 976.23,465.56 978.10,469.51 979.97,473.34 981.85,477.06 983.72,480.65 985.59,484.12 987.46,487.47 989.34,490.69 991.21,493.78 993.08,496.74 994.95,499.57 996.83,502.27 998.70,504.82 1000.57,507.25 1002.45,509.53 1004.32,511.67 1006.19,513.67 1008.06,515.52 1009.93,517.23 1011.81,518.80 1013.68,520.22 1015.55,521.49 1017.42,522.62 1019.30,523.59 1021.17,524.42 1023.04,525.10 1024.91,525.62 1026.79,526.00 1028.66,526.23 1030.53,526.30 1032.40,526.22 1034.28,526.00 1036.15,525.62 1038.02,525.09 1039.89,524.41 1041.77,523.58 1043.64,522.60 1045.51,521.47 1047.38,520.20 1049.26,518.77 1051.13,517.21 1053.00,515.49 1054.88,513.63 1056.75,511.63 1058.62,509.49 1060.49,507.20 1062.36,504.78 1064.24,502.22 1066.11,499.52 1067.98,496.69 1069.86,493.73 1071.73,490.63 1073.60,487.41" fill="none" stroke="#c96341" stroke-width="1.9"/>
<svg x="325.45000000000005" y="43.85" width="747.2999999999998" height="481.59999999999997" overflow="hidden"><g transform="translate(-325.45000000000005,-43.85)">
<path d="M321.50,39.90L327.70,46.10M327.70,39.90L321.50,46.10M328.99,41.11L335.19,47.31M335.19,41.11L328.99,47.31M336.48,44.72L342.68,50.92M342.68,44.72L336.48,50.92M343.97,50.69L350.17,56.89M350.17,50.69L343.97,56.89M351.46,58.98L357.66,65.18M357.66,58.98L351.46,65.18M358.95,69.48L365.15,75.68M365.15,69.48L358.95,75.68M366.44,82.11L372.64,88.31M372.64,82.11L366.44,88.31M373.93,96.73L380.13,102.93M380.13,96.73L373.93,102.93M381.42,113.19L387.62,119.39M387.62,113.19L381.42,119.39M388.91,131.34L395.11,137.54M395.11,131.34L388.91,137.54M396.40,150.99L402.60,157.19M402.60,150.99L396.40,157.19M403.89,171.94L410.09,178.14M410.09,171.94L403.89,178.14M411.38,193.99L417.58,200.19M417.58,193.99L411.38,200.19M418.87,216.91L425.07,223.11M425.07,216.91L418.87,223.11M426.36,240.48L432.56,246.68M432.56,240.48L426.36,246.68M433.85,264.46L440.05,270.66M440.05,264.46L433.85,270.66M441.34,288.61L447.54,294.81M447.54,288.61L441.34,294.81M448.83,312.69L455.03,318.89M455.03,312.69L448.83,318.89M456.32,336.45L462.52,342.65M462.52,336.45L456.32,342.65M463.81,359.67L470.01,365.87M470.01,359.67L463.81,365.87M471.30,382.11L477.50,388.31M477.50,382.11L471.30,388.31M478.79,403.55L484.99,409.75M484.99,403.55L478.79,409.75M486.28,423.76L492.48,429.96M492.48,423.76L486.28,429.96M493.77,442.56L499.97,448.76M499.97,442.56L493.77,448.76M501.26,459.74L507.46,465.94M507.46,459.74L501.26,465.94M508.75,475.15L514.95,481.35M514.95,475.15L508.75,481.35M516.24,488.62L522.44,494.82M522.44,488.62L516.24,494.82M523.73,500.02L529.93,506.22M529.93,500.02L523.73,506.22M531.22,509.24L537.42,515.44M537.42,509.24L531.22,515.44M538.71,516.18L544.91,522.38M544.91,516.18L538.71,522.38M546.20,520.78L552.40,526.98M552.40,520.78L546.20,526.98M553.69,522.99L559.89,529.19M559.89,522.99L553.69,529.19M561.18,522.79L567.38,528.99M567.38,522.79L561.18,528.99M568.67,520.17L574.87,526.37M574.87,520.17L568.67,526.37M576.16,515.18L582.36,521.38M582.36,515.18L576.16,521.38M583.65,507.84L589.85,514.04M589.85,507.84L583.65,514.04M591.14,498.25L597.34,504.45M597.34,498.25L591.14,504.45M598.63,486.49L604.83,492.69M604.83,486.49L598.63,492.69M606.12,472.69L612.32,478.89M612.32,472.69L606.12,478.89M613.61,456.97L619.81,463.17M619.81,456.97L613.61,463.17M621.10,439.50L627.30,445.70M627.30,439.50L621.10,445.70M628.59,420.46L634.79,426.66M634.79,420.46L628.59,426.66M636.08,400.02L642.28,406.22M642.28,400.02L636.08,406.22M643.57,378.40L649.77,384.60M649.77,378.40L643.57,384.60M651.06,355.82L657.26,362.02M657.26,355.82L651.06,362.02M658.55,332.49L664.75,338.69M664.75,332.49L658.55,338.69M666.04,308.65L672.24,314.85M672.24,308.65L666.04,314.85M673.53,284.54L679.73,290.74M679.73,284.54L673.53,290.74M681.02,260.41L687.22,266.61M687.22,260.41L681.02,266.61M688.51,236.48L694.71,242.68M694.71,236.48L688.51,242.68M696.00,213.00L702.20,219.20M702.20,213.00L696.00,219.20M703.49,190.21L709.69,196.41M709.69,190.21L703.49,196.41M710.98,168.33L717.18,174.53M717.18,168.33L710.98,174.53M718.47,147.59L724.67,153.79M724.67,147.59L718.47,153.79M725.96,128.18L732.16,134.38M732.16,128.18L725.96,134.38M733.45,110.30L739.65,116.50M739.65,110.30L733.45,116.50M740.94,94.13L747.14,100.33M747.14,94.13L740.94,100.33M748.43,79.84L754.63,86.04M754.63,79.84L748.43,86.04M755.92,67.56L762.12,73.76M762.12,67.56L755.92,73.76M763.41,57.42L769.61,63.62M769.61,57.42L763.41,63.62M770.90,49.52L777.10,55.72M777.10,49.52L770.90,55.72M778.39,43.94L784.59,50.14M784.59,43.94L778.39,50.14M785.88,40.74L792.08,46.94M792.08,40.74L785.88,46.94M793.37,39.93L799.57,46.13M799.57,39.93L793.37,46.13M800.86,41.55L807.06,47.75M807.06,41.55L800.86,47.75M808.35,45.56L814.55,51.76M814.55,45.56L808.35,51.76M815.84,51.93L822.04,58.13M822.04,51.93L815.84,58.13M823.33,60.59L829.53,66.79M829.53,60.59L823.33,66.79M830.82,71.46L837.02,77.66M837.02,71.46L830.82,77.66M838.31,84.43L844.51,90.63M844.51,84.43L838.31,90.63M845.80,99.37L852.00,105.57M852.00,99.37L845.80,105.57M853.29,116.13L859.49,122.33M859.49,116.13L853.29,122.33M860.78,134.54L866.98,140.74M866.98,134.54L860.78,140.74M868.27,154.42L874.47,160.62M874.47,154.42L868.27,160.62M875.76,175.58L881.96,181.78M881.96,175.58L875.76,181.78M883.25,197.79L889.45,203.99M889.45,197.79L883.25,203.99M890.74,220.83L896.94,227.03M896.94,220.83L890.74,227.03M898.23,244.49L904.43,250.69M904.43,244.49L898.23,250.69M905.72,268.51L911.92,274.71M911.92,268.51L905.72,274.71M913.21,292.67L919.41,298.87M919.41,292.67L913.21,298.87M920.70,316.71L926.90,322.91M926.90,316.71L920.70,322.91M928.19,340.40L934.39,346.60M934.39,340.40L928.19,346.60M935.68,363.51L941.88,369.71M941.88,363.51L935.68,369.71M943.17,385.79L949.37,391.99M949.37,385.79L943.17,391.99M950.66,407.04L956.86,413.24M956.86,407.04L950.66,413.24M958.15,427.03L964.35,433.23M964.35,427.03L958.15,433.23M965.64,445.56L971.84,451.76M971.84,445.56L965.64,451.76M973.13,462.46L979.33,468.66M979.33,462.46L973.13,468.66M980.62,477.55L986.82,483.75M986.82,477.55L980.62,483.75M988.11,490.68L994.31,496.88M994.31,490.68L988.11,496.88M995.60,501.72L1001.80,507.92M1001.80,501.72L995.60,507.92M1003.09,510.57L1009.29,516.77M1009.29,510.57L1003.09,516.77M1010.58,517.12L1016.78,523.32M1016.78,517.12L1010.58,523.32M1018.07,521.32L1024.27,527.52M1024.27,521.32L1018.07,527.52M1025.56,523.13L1031.76,529.33M1031.76,523.13L1025.56,529.33M1033.05,522.52L1039.25,528.72M1039.25,522.52L1033.05,528.72M1040.54,519.50L1046.74,525.70M1046.74,519.50L1040.54,525.70M1048.03,514.11L1054.23,520.31M1054.23,514.11L1048.03,520.31M1055.52,506.39L1061.72,512.59M1061.72,506.39L1055.52,512.59M1063.01,496.42L1069.21,502.62M1069.21,496.42L1063.01,502.62M1070.50,484.31L1076.70,490.51M1076.70,484.31L1070.50,490.51" fill="none" stroke="#c72869" stroke-width="2.9" stroke-linecap="round"/>
</g></svg>
<text transform="translate(281,575.5) scale(0.8928571428571428,1)" x="0" y="0" style="font-size:12.88px;letter-spacing:-0.694px" fill="#1c1c1c" text-anchor="start" >Plot commands:</text>
<rect x="281.5" y="582.3" width="801" height="174.5" fill="#fff"/>
<text transform="translate(320.2,596.5) scale(1,0.86)" x="0" y="0" style="font-family:'Liberation Mono',monospace;font-size:13.33px" fill="#000">1</text>
<text transform="translate(348.5,596.5) scale(1,0.86)" x="0" y="0" style="font-family:'Liberation Mono',monospace;font-size:13.33px;white-space:pre" xml:space="preserve"><tspan fill="#000">hl = </tspan><tspan fill="#ff00ff">plot</tspan><tspan fill="#000">(data(:, 1),data(:, 2));</tspan></text>
<text transform="translate(320.2,614.4) scale(1,0.86)" x="0" y="0" style="font-family:'Liberation Mono',monospace;font-size:13.33px" fill="#000">2</text>
<text transform="translate(348.5,614.4) scale(1,0.86)" x="0" y="0" style="font-family:'Liberation Mono',monospace;font-size:13.33px;white-space:pre" xml:space="preserve"><tspan fill="#ff00ff">set</tspan><tspan fill="#000">(hl, </tspan><tspan fill="#2a2ac8">&#39;color&#39;</tspan><tspan fill="#000">, [201 99 65]);</tspan></text>
<text transform="translate(320.2,632.2) scale(1,0.86)" x="0" y="0" style="font-family:'Liberation Mono',monospace;font-size:13.33px" fill="#000">3</text>
<text transform="translate(348.5,632.2) scale(1,0.86)" x="0" y="0" style="font-family:'Liberation Mono',monospace;font-size:13.33px;white-space:pre" xml:space="preserve"><tspan fill="#ff00ff">set</tspan><tspan fill="#000">(hl, </tspan><tspan fill="#2a2ac8">&#39;marker&#39;</tspan><tspan fill="#000">, </tspan><tspan fill="#2a2ac8">&#39;x&#39;</tspan><tspan fill="#000">);</tspan></text>
<text transform="translate(320.2,650.0) scale(1,0.86)" x="0" y="0" style="font-family:'Liberation Mono',monospace;font-size:13.33px" fill="#000">4</text>
<text transform="translate(348.5,650.0) scale(1,0.86)" x="0" y="0" style="font-family:'Liberation Mono',monospace;font-size:13.33px;white-space:pre" xml:space="preserve"><tspan fill="#ff00ff">set</tspan><tspan fill="#000">(hl, </tspan><tspan fill="#2a2ac8">&#39;markerfacecolor&#39;</tspan><tspan fill="#000">, [199 40 105]);</tspan></text>
<text transform="translate(320.2,667.9) scale(1,0.86)" x="0" y="0" style="font-family:'Liberation Mono',monospace;font-size:13.33px" fill="#000">5</text>
<text transform="translate(320.2,685.8) scale(1,0.86)" x="0" y="0" style="font-family:'Liberation Mono',monospace;font-size:13.33px" fill="#000">6</text>
<rect x="929.5" y="763.5" width="74" height="22" rx="2" fill="#f3f3f3" stroke="#bdbdbd"/>
<text transform="translate(966.3,779) scale(0.8928571428571428,1)" x="0" y="0" style="font-size:12.88px;letter-spacing:-0.616px" fill="#1c1c1c" text-anchor="middle" >Clear Plot</text>
<rect x="1009.5" y="763.5" width="73.5" height="22" rx="2" fill="#f3f3f3" stroke="#bdbdbd"/>
<text transform="translate(1045.5,779) scale(0.8928571428571428,1)" x="0" y="0" style="font-size:12.88px;letter-spacing:-0.672px" fill="#1c1c1c" text-anchor="middle" >Reset</text>
</svg>
</body></html>
